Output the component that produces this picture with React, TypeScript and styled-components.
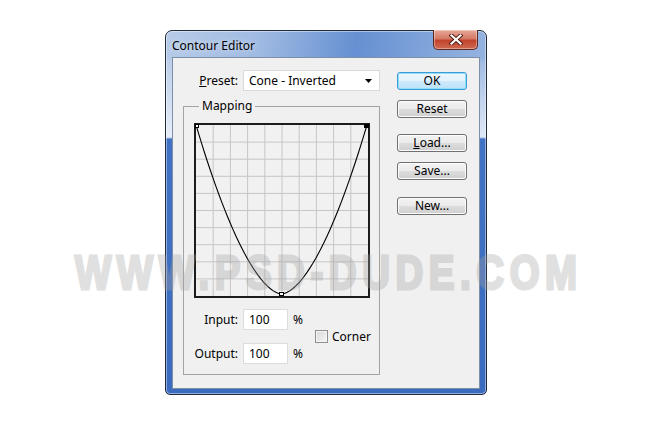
import React from 'react'
import styled, { createGlobalStyle } from 'styled-components'

const GlobalStyle = createGlobalStyle`
  html, body {
    margin: 0;
    padding: 0;
    background: #ffffff;
  }
  body {
    width: 650px;
    height: 426px;
    overflow: hidden;
    font-family: "Noto Sans", "Open Sans", sans-serif;
    font-size: 12px;
    color: #000;
  }
`

const Page = styled.div`
  position: relative;
  width: 650px;
  height: 426px;
  box-sizing: border-box;
  padding: 30px 0 0 165px;
`

// glass window frame
const Frame = styled.div`
  width: 322px;
  height: 365px;
  box-sizing: border-box;
  border: 1px solid #1f2a3a;
  border-radius: 7px 7px 5px 5px;
  padding: 0 6px 5px 6px;
  display: flex;
  flex-direction: column;
  box-shadow: inset 0 0 0 1px rgba(255, 255, 255, 0.45);
  background:
    linear-gradient(to bottom, rgba(255,255,255,0) 0, rgba(255,255,255,0) 27px, rgba(255,255,255,0.12) 30px, rgba(255,255,255,0.7) 106px, rgba(255,255,255,0) 107px),
    linear-gradient(to bottom, rgba(0,0,0,0) 0, rgba(0,0,0,0) 107px, #4272c3 108px, #3b6bbf 100%),
    linear-gradient(100deg, #b6cbe8 0%, #9fbae2 25%, #6690d2 50%, #82a5da 70%, #a9c2e6 100%);
`

const TitleBar = styled.div`
  height: 26px;
  flex: none;
  display: flex;
  justify-content: space-between;
  align-items: flex-start;
`

const Title = styled.div`
  padding-top: 6px;
  font-size: 12px;
  color: #000;
  text-shadow: 0 0 6px rgba(255, 255, 255, 0.8);
`

const CloseButton = styled.div`
  width: 45px;
  height: 20px;
  margin: -1px 2px 0 0;
  box-sizing: border-box;
  border: 1px solid #5c2a22;
  border-top: none;
  border-radius: 0 0 5px 5px;
  display: flex;
  align-items: center;
  justify-content: center;
  background: linear-gradient(to bottom, #e8a899 0%, #d47a66 45%, #c2432c 55%, #cf6a52 100%);
  box-shadow: inset 0 0 0 1px rgba(255, 255, 255, 0.35);
`

const Client = styled.div`
  flex: 1;
  box-sizing: border-box;
  border: 1px solid #7c8fa8;
  background: #f0f0f0;
  display: flex;
  padding: 12px 12px 0 10px;
`

const LeftCol = styled.div`
  width: 197px;
  display: flex;
  flex-direction: column;
`

const PresetRow = styled.div`
  height: 21px;
  display: flex;
  justify-content: flex-end;
  align-items: center;
  gap: 5px;
`

const Select = styled.div`
  width: 137px;
  height: 21px;
  box-sizing: border-box;
  border: 1px solid #dadada;
  background: #ffffff;
  display: flex;
  align-items: center;
  justify-content: space-between;
  padding: 0 7px 0 5px;
`

const Group = styled.fieldset`
  margin: 7px 0 0 0;
  padding: 9px 9px 10px 10px;
  border: 1px solid #a3a3a3;
  min-width: 0;
`

const Legend = styled.legend`
  margin-left: 5px;
  padding: 0 3px;
  line-height: 16px;
`

const FieldsArea = styled.div`
  margin-top: 11px;
  display: flex;
  align-items: center;
`

const FieldRows = styled.div`
  display: flex;
  flex-direction: column;
  gap: 13px;
`

const FieldRow = styled.div`
  height: 21px;
  display: flex;
  align-items: center;
  gap: 5px;
`

const FieldLabel = styled.span`
  width: 44px;
  text-align: right;
`

const NumberBox = styled.input`
  width: 45px;
  height: 21px;
  box-sizing: border-box;
  border: 1px solid #dcdcdc;
  background: #ffffff;
  padding: 0 5px;
  margin: 0;
  font: inherit;
  color: #000;
  outline: none;
`

const CheckLabel = styled.label`
  margin-left: 12px;
  display: flex;
  align-items: center;
  gap: 4px;
`

const CheckBox = styled.span`
  width: 13px;
  height: 13px;
  box-sizing: border-box;
  border: 1px solid #8e8f8f;
  background: linear-gradient(135deg, #d8d8d8 0%, #f6f6f6 100%);
  box-shadow: inset 0 0 0 1px #f4f4f4;
`

const RightCol = styled.div`
  margin-left: 17px;
  width: 70px;
  display: flex;
  flex-direction: column;
`

const Button = styled.button<{ $default?: boolean; $gap: number }>`
  margin: ${p => p.$gap}px 0 0 0;
  width: 70px;
  height: 18px;
  box-sizing: border-box;
  padding: 0;
  font: inherit;
  color: #000;
  line-height: 14px;
  border-radius: 3px;
  border: 1px solid ${p => (p.$default ? '#3c9ad6' : '#707070')};
  background: ${p =>
    p.$default
      ? 'linear-gradient(to bottom, #eef7fd 0%, #e3f2fc 50%, #cdeafb 51%, #bde2f8 100%)'
      : 'linear-gradient(to bottom, #f3f3f3 0%, #ebebeb 50%, #dddddd 51%, #cfcfcf 100%)'};
  box-shadow: inset 0 0 0 1px ${p => (p.$default ? '#8fe0fb' : '#fcfcfc')};
`

// semi-transparent site watermark lying over the dialog
const Watermark = styled.div`
  position: absolute;
  left: 75px;
  top: 249px;
  font-family: "Liberation Sans", Arial, sans-serif;
  font-weight: bold;
  font-size: 48px;
  line-height: 48px;
  letter-spacing: 7px;
  color: #a2a2a2;
  -webkit-text-stroke: 3px #a2a2a2;
  opacity: 0.33;
  white-space: nowrap;
  transform: scaleX(0.8);
  transform-origin: 0 0;
  pointer-events: none;
`

const GRID_W = 176
const GRID_H = 175

const ContourGraph = () => {
  const pts: string[] = []
  for (let i = 0; i <= 60; i++) {
    const t = -1 + (i / 60) * 2
    const x = 87.5 + t * 85.5
    const y = 171 - 169 * Math.pow(Math.abs(t), 1.7)
    pts.push(`${x.toFixed(2)},${y.toFixed(2)}`)
  }
  const lines = []
  for (let i = 1; i < 10; i++) {
    const gx = 2 + (i * 172) / 10
    const gy = 2 + (i * 171) / 10
    lines.push(<line key={'v' + i} x1={gx} y1={2} x2={gx} y2={GRID_H - 2} stroke="#c6c6c6" strokeWidth={1} />)
    lines.push(<line key={'h' + i} x1={2} y1={gy} x2={GRID_W - 2} y2={gy} stroke="#c6c6c6" strokeWidth={1} />)
  }
  return (
    <svg width={GRID_W} height={GRID_H} style={{ display: 'block' }}>
      <rect x={0} y={0} width={GRID_W} height={GRID_H} fill="#f1f1f1" />
      {lines}
      <rect x={1} y={1} width={GRID_W - 2} height={GRID_H - 2} fill="none" stroke="#1c1c1c" strokeWidth={2} />
      <polyline points={pts.join(' ')} fill="none" stroke="#000" strokeWidth={1.1} />
      <rect x={1.5} y={1.5} width={3} height={3} fill="#fff" stroke="#000" strokeWidth={1} />
      <rect x={170} y={1} width={5} height={4} fill="#000" />
      <rect x={85.5} y={169.5} width={4} height={3} fill="#fff" stroke="#000" strokeWidth={1} />
    </svg>
  )
}

export default function App() {
  return (
    <>
      <GlobalStyle />
      <Page>
        <Frame>
          <TitleBar>
            <Title>Contour Editor</Title>
            <CloseButton>
              <svg width="14" height="11" viewBox="0 0 14 11">
                <path d="M2.5 1.5 L11.5 9.5 M11.5 1.5 L2.5 9.5" stroke="#4a1a14" strokeWidth="4" strokeLinecap="square" />
                <path d="M2.5 1.5 L11.5 9.5 M11.5 1.5 L2.5 9.5" stroke="#ffffff" strokeWidth="2.2" strokeLinecap="square" />
              </svg>
            </CloseButton>
          </TitleBar>
          <Client>
            <LeftCol>
              <PresetRow>
                <span><u>P</u>reset:</span>
                <Select>
                  <span>Cone - Inverted</span>
                  <svg width="7" height="4" viewBox="0 0 7 4">
                    <path d="M0 0 H7 L3.5 4 Z" fill="#000" />
                  </svg>
                </Select>
              </PresetRow>
              <Group>
                <Legend>Mapping</Legend>
                <ContourGraph />
                <FieldsArea>
                  <FieldRows>
                    <FieldRow>
                      <FieldLabel>Input:</FieldLabel>
                      <NumberBox defaultValue="100" readOnly />
                      <span>%</span>
                    </FieldRow>
                    <FieldRow>
                      <FieldLabel>Output:</FieldLabel>
                      <NumberBox defaultValue="100" readOnly />
                      <span>%</span>
                    </FieldRow>
                  </FieldRows>
                  <CheckLabel>
                    <CheckBox />
                    <span>Corner</span>
                  </CheckLabel>
                </FieldsArea>
              </Group>
            </LeftCol>
            <RightCol>
              <Button $default $gap={2}>OK</Button>
              <Button $gap={10}>Reset</Button>
              <Button $gap={16}><u>L</u>oad...</Button>
              <Button $gap={10}>Save...</Button>
              <Button $gap={17}>New...</Button>
            </RightCol>
          </Client>
        </Frame>
        <Watermark>WWW.PSD-DUDE.COM</Watermark>
      </Page>
    </>
  )
}
